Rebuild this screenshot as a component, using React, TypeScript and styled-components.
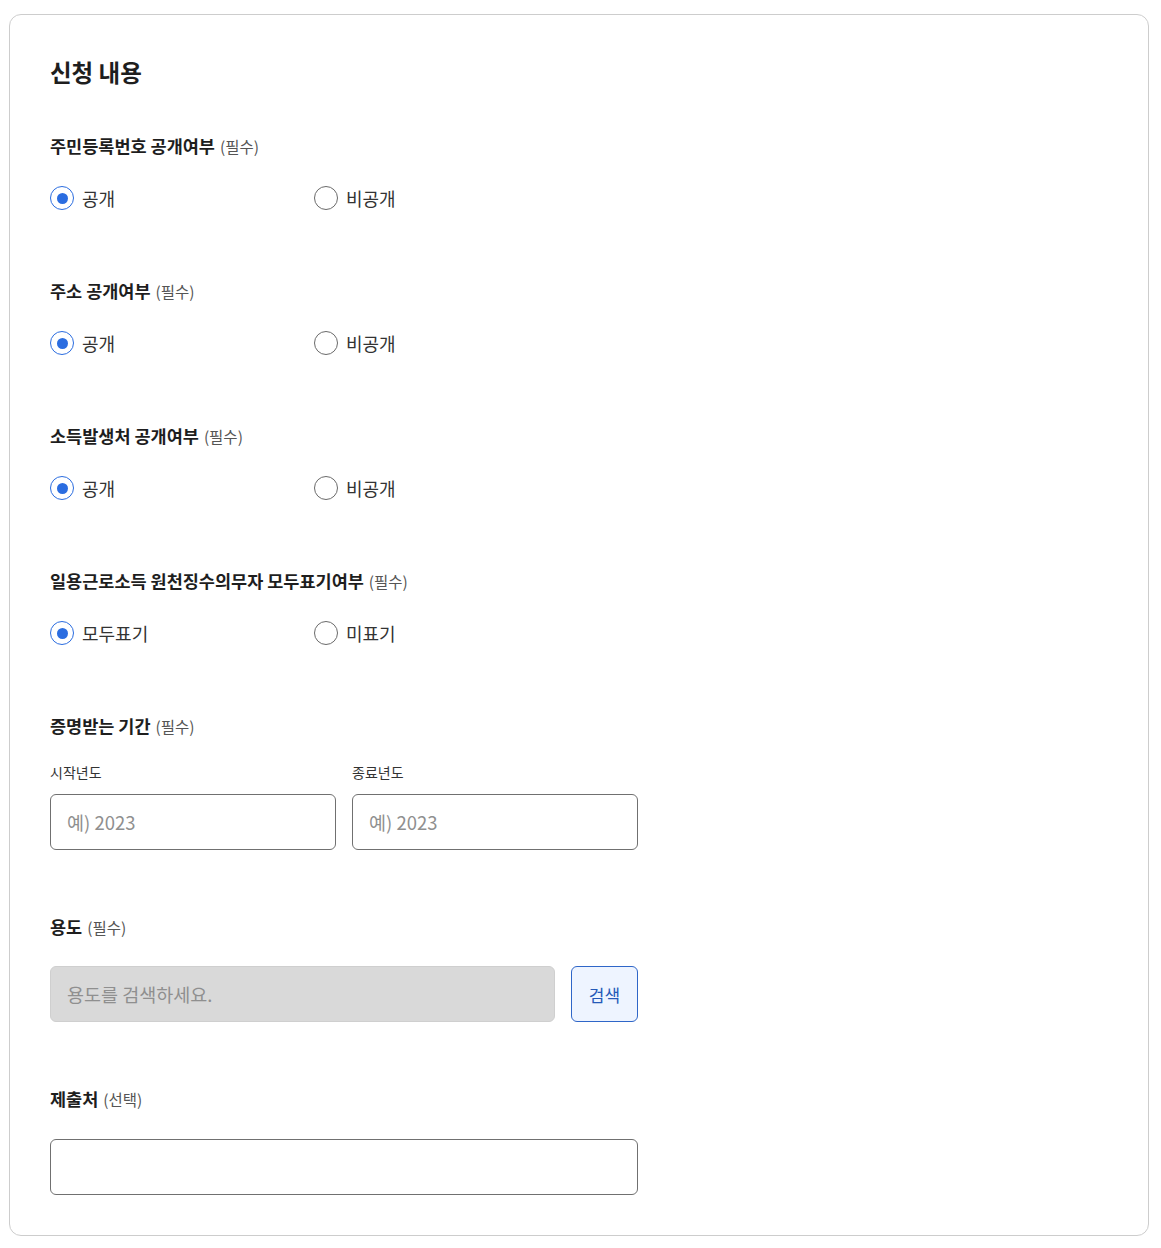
import styled, { createGlobalStyle } from 'styled-components'

const GlobalStyle = createGlobalStyle`
  html, body {
    margin: 0;
    padding: 0;
    background: #fff;
  }
  body {
    font-family: "Noto Sans CJK KR", "Noto Sans", sans-serif;
    color: #222;
  }
  * { box-sizing: border-box; }
`

const Page = styled.div`
  padding: 14px 12px 12px 9px;
`

const Card = styled.section`
  width: 1140px;
  border: 1px solid #cdcdcd;
  border-radius: 12px;
  padding: 40px 40px 40px 40px;
  display: flex;
  flex-direction: column;
`

const Title = styled.h2`
  margin: 1px 0 46px;
  font-size: 23.5px;
  line-height: 32px;
  font-weight: 700;
  color: #1e1e1e;
`

const Fields = styled.div`
  display: flex;
  flex-direction: column;
  gap: 65px;
`

const Field = styled.div<{ $gap?: number }>`
  display: flex;
  flex-direction: column;
  gap: ${p => p.$gap ?? 24}px;
`

const Label = styled.div`
  display: flex;
  align-items: baseline;
  height: 24px;
  font-size: 17.5px;
  line-height: 24px;
  font-weight: 700;
  color: #1e1e1e;
`

const Hint = styled.span`
  font-size: 15.5px;
  line-height: 24px;
  font-weight: 400;
  color: #555;
  margin-left: 5px;
`

const RadioRow = styled.div`
  display: flex;
  height: 32px;
  align-items: center;
`

const RadioOption = styled.label`
  width: 264px;
  display: flex;
  align-items: center;
  gap: 8px;
  font-size: 18px;
  color: #333;
  cursor: pointer;
`

const Circle = styled.span<{ $on: boolean }>`
  width: 24px;
  height: 24px;
  border-radius: 50%;
  border: 1.5px solid ${p => (p.$on ? '#2b6de0' : '#6a6a6a')};
  display: flex;
  align-items: center;
  justify-content: center;
  &::after {
    content: '';
    width: 11px;
    height: 11px;
    border-radius: 50%;
    background: ${p => (p.$on ? '#2b6de0' : 'transparent')};
  }
`

const Pair = styled.div`
  display: flex;
  gap: 16px;
  width: 588px;
`

const SubField = styled.div`
  flex: 1;
  display: flex;
  flex-direction: column;
  gap: 12px;
`

const SubLabel = styled.div`
  font-size: 14px;
  line-height: 20px;
  color: #333;
`

const Input = styled.input<{ $disabled?: boolean }>`
  width: 100%;
  height: 56px;
  padding: 0 16px;
  border: 1px solid ${p => (p.$disabled ? '#cfcfcf' : '#707070')};
  border-radius: 6px;
  background: ${p => (p.$disabled ? '#d9d9d9' : '#fff')};
  font-family: inherit;
  font-size: 18.5px;
  color: #222;
  outline: none;
  &::placeholder {
    color: #8f8f8f;
  }
`

const SearchRow = styled.div`
  display: flex;
  gap: 16px;
  width: 588px;
`

const SearchButton = styled.button`
  flex: 0 0 67px;
  height: 56px;
  border: 1px solid #2f66c8;
  border-radius: 6px;
  background: #eef4ff;
  color: #2559b8;
  font-family: inherit;
  font-size: 17px;
  cursor: pointer;
`

const Wide = styled.div`
  width: 588px;
`

function Radio({ label, on }: { label: string; on: boolean }) {
  return (
    <RadioOption>
      <Circle $on={on} />
      {label}
    </RadioOption>
  )
}

function RadioField({ title, options }: { title: string; options: [string, string] }) {
  return (
    <Field>
      <Label>{title}<Hint>(필수)</Hint></Label>
      <RadioRow>
        <Radio label={options[0]} on />
        <Radio label={options[1]} on={false} />
      </RadioRow>
    </Field>
  )
}

export default function App() {
  return (
    <Page>
      <GlobalStyle />
      <Card>
        <Title>신청 내용</Title>
        <Fields>
          <RadioField title="주민등록번호 공개여부" options={["공개", "비공개"]} />
          <RadioField title="주소 공개여부" options={["공개", "비공개"]} />
          <RadioField title="소득발생처 공개여부" options={["공개", "비공개"]} />
          <RadioField title="일용근로소득 원천징수의무자 모두표기여부" options={["모두표기", "미표기"]} />
          <Field>
            <Label>증명받는 기간<Hint>(필수)</Hint></Label>
            <Pair>
              <SubField>
                <SubLabel>시작년도</SubLabel>
                <Input placeholder="예) 2023" />
              </SubField>
              <SubField>
                <SubLabel>종료년도</SubLabel>
                <Input placeholder="예) 2023" />
              </SubField>
            </Pair>
          </Field>
          <Field $gap={27}>
            <Label>용도<Hint>(필수)</Hint></Label>
            <SearchRow>
              <Input $disabled disabled placeholder="용도를 검색하세요." />
              <SearchButton>검색</SearchButton>
            </SearchRow>
          </Field>
          <Field $gap={28}>
            <Label>제출처<Hint>(선택)</Hint></Label>
            <Wide>
              <Input />
            </Wide>
          </Field>
        </Fields>
      </Card>
    </Page>
  )
}
